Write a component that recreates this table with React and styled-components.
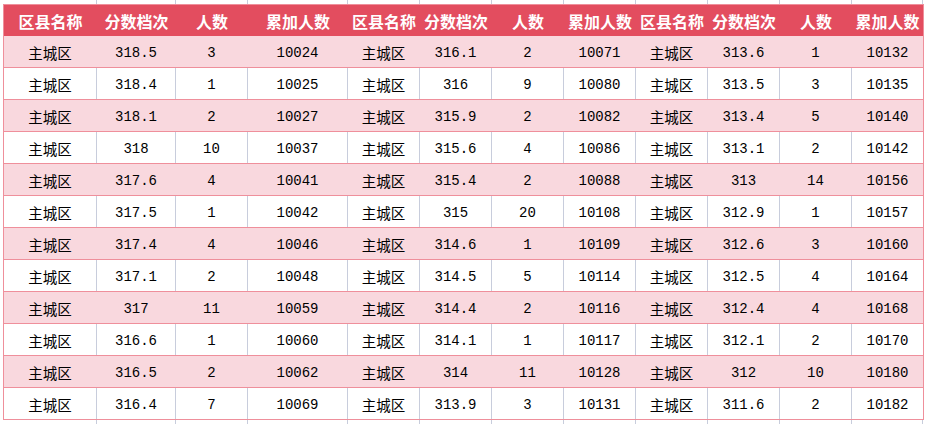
import React from "react";
import styled, { createGlobalStyle } from "styled-components";

const GlobalStyle = createGlobalStyle`
  html, body {
    margin: 0;
    padding: 0;
    background: #ffffff;
  }
`;

const COLS = "93px 79px 72px 100px repeat(7, 72px) 71px";
const RED = "#e34d5f";
const PINK = "#f9d8de";
const PINK_LINE = "#ef8f9b";
const GRID_LINE = "#c8cddc";

const Sheet = styled.div`
  width: 927px;
  height: 424px;
  overflow: hidden;
  background: #ffffff;
`;

const GridStrip = styled.div`
  display: grid;
  grid-template-columns: ${COLS};
  height: ${(p) => p.$h}px;
  margin-left: 4px;
`;

const StripCell = styled.div`
  border-right: 1px solid ${GRID_LINE};
  box-sizing: border-box;
`;

const Table = styled.div`
  margin-left: 3px;
  width: 921px;
  box-sizing: border-box;
  border: 1px solid ${PINK_LINE};
  border-bottom: none;
`;

const HeaderRow = styled.div`
  display: grid;
  grid-template-columns: ${COLS};
  height: 31px;
  background: ${RED};
`;

const HeadCell = styled.div`
  display: flex;
  align-items: center;
  justify-content: center;
  color: #ffffff;
  font-family: "Noto Sans CJK SC", sans-serif;
  font-weight: 700;
  font-size: 16px;
  white-space: nowrap;
`;

const Row = styled.div`
  display: grid;
  grid-template-columns: ${COLS};
  height: 32px;
  box-sizing: border-box;
  border-bottom: 1px solid ${PINK_LINE};
  background: ${(p) => (p.$striped ? PINK : "#ffffff")};
`;

const Cell = styled.div`
  display: flex;
  align-items: center;
  justify-content: center;
  padding-top: 2px;
  box-sizing: border-box;
  border-right: 1px solid ${(p) => (p.$striped ? PINK : GRID_LINE)};
  color: #000000;
  font-family: ${(p) =>
    p.$cjk ? '"Noto Sans CJK SC", sans-serif' : '"Liberation Mono", monospace'};
  font-size: ${(p) => (p.$cjk ? "14.5px" : "14px")};
  white-space: nowrap;

  &:last-child {
    border-right: none;
  }
`;

const headers = ["区县名称", "分数档次", "人数", "累加人数"];

const rows = [
  ["318.5", 3, 10024, "316.1", 2, 10071, "313.6", 1, 10132],
  ["318.4", 1, 10025, "316", 9, 10080, "313.5", 3, 10135],
  ["318.1", 2, 10027, "315.9", 2, 10082, "313.4", 5, 10140],
  ["318", 10, 10037, "315.6", 4, 10086, "313.1", 2, 10142],
  ["317.6", 4, 10041, "315.4", 2, 10088, "313", 14, 10156],
  ["317.5", 1, 10042, "315", 20, 10108, "312.9", 1, 10157],
  ["317.4", 4, 10046, "314.6", 1, 10109, "312.6", 3, 10160],
  ["317.1", 2, 10048, "314.5", 5, 10114, "312.5", 4, 10164],
  ["317", 11, 10059, "314.4", 2, 10116, "312.4", 4, 10168],
  ["316.6", 1, 10060, "314.1", 1, 10117, "312.1", 2, 10170],
  ["316.5", 2, 10062, "314", 11, 10128, "312", 10, 10180],
  ["316.4", 7, 10069, "313.9", 3, 10131, "311.6", 2, 10182],
];

const emptyCols = Array.from({ length: 12 });

const App = () => {
  return (
    <Sheet>
      <GlobalStyle />
      <GridStrip $h={4}>
        {emptyCols.map((_, i) => (
          <StripCell key={i} />
        ))}
      </GridStrip>
      <Table>
        <HeaderRow>
          {[0, 1, 2].flatMap((g) =>
            headers.map((h) => <HeadCell key={g + h}>{h}</HeadCell>)
          )}
        </HeaderRow>
        {rows.map((r, i) => {
          const striped = i % 2 === 0;
          return (
            <Row key={i} $striped={striped}>
              {[0, 1, 2].map((g) => (
                <React.Fragment key={g}>
                  <Cell $cjk $striped={striped}>
                    主城区
                  </Cell>
                  <Cell $striped={striped}>{r[g * 3]}</Cell>
                  <Cell $striped={striped}>{r[g * 3 + 1]}</Cell>
                  <Cell $striped={striped}>{r[g * 3 + 2]}</Cell>
                </React.Fragment>
              ))}
            </Row>
          );
        })}
      </Table>
      <GridStrip $h={4}>
        {emptyCols.map((_, i) => (
          <StripCell key={i} />
        ))}
      </GridStrip>
    </Sheet>
  );
};

export default App;
